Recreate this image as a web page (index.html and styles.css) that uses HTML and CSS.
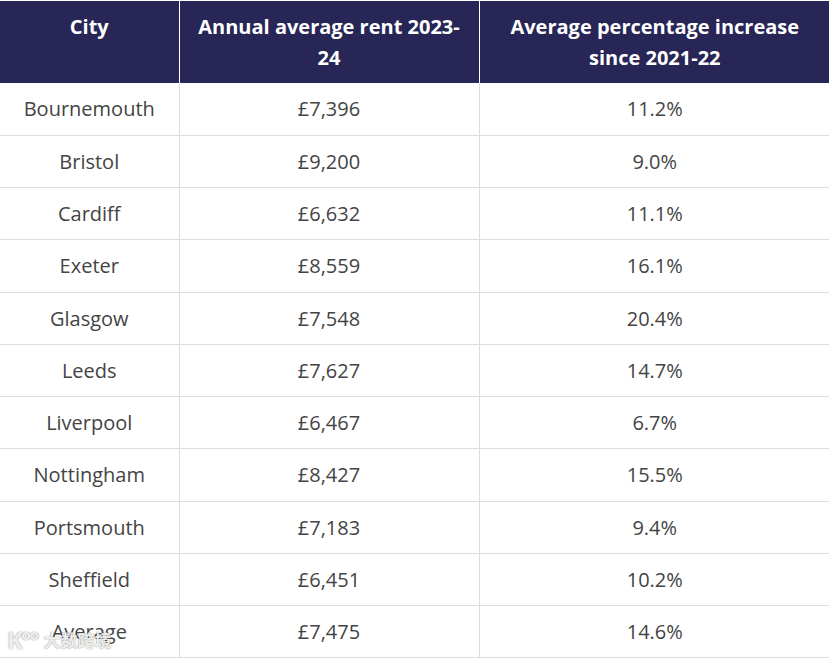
FILE: index.html
```html
<!DOCTYPE html>
<html>
<head>
<meta charset="utf-8">
<link rel="stylesheet" href="styles.css">
</head>
<body>
<div class="wrap">
<table class="rent">
  <thead>
    <tr><th class="c1">City</th><th class="c2">Annual average rent 2023-24</th><th class="c3">Average percentage increase since 2021-22</th></tr>
  </thead>
  <tbody>
    <tr><td>Bournemouth</td><td>£7,396</td><td>11.2%</td></tr>
    <tr><td>Bristol</td><td>£9,200</td><td>9.0%</td></tr>
    <tr><td>Cardiff</td><td>£6,632</td><td>11.1%</td></tr>
    <tr><td>Exeter</td><td>£8,559</td><td>16.1%</td></tr>
    <tr><td>Glasgow</td><td>£7,548</td><td>20.4%</td></tr>
    <tr><td>Leeds</td><td>£7,627</td><td>14.7%</td></tr>
    <tr><td>Liverpool</td><td>£6,467</td><td>6.7%</td></tr>
    <tr><td>Nottingham</td><td>£8,427</td><td>15.5%</td></tr>
    <tr><td>Portsmouth</td><td>£7,183</td><td>9.4%</td></tr>
    <tr><td>Sheffield</td><td>£6,451</td><td>10.2%</td></tr>
    <tr><td>Average</td><td>£7,475</td><td>14.6%</td></tr>
  </tbody>
</table>
<div class="watermark"><span class="wm-logo">K°°</span><span class="wm-text">大数跨境</span></div>
</div>
</body>
</html>
```
FILE: styles.css
```css
html, body {
  margin: 0;
  padding: 0;
  background: #fff;
  overflow: hidden;
}
.wrap {
  position: relative;
  width: 829px;
}
.rent {
  border-collapse: collapse;
  width: 830px;
  table-layout: fixed;
  font-family: "Open Sans", "Noto Sans", sans-serif;
  margin-top: 1px;
}
.rent th {
  background: #272656;
  color: #ffffff;
  font-weight: 700;
  font-size: 20px;
  line-height: 31px;
  height: 82px;
  padding: 10px 16px 0;
  text-align: center;
  vertical-align: top;
  border-left: 1px solid #ffffff;
  box-sizing: border-box;
}
.rent th.c1 { width: 179px; border-left: none; }
.rent th.c2 { width: 300px; }
.rent th.c3 { width: 351px; }
.rent td {
  color: #444444;
  font-size: 20px;
  height: 52.27px;
  padding: 0;
  text-align: center;
  border-left: 1px solid #dddddd;
  border-bottom: 1px solid #dddddd;
  box-sizing: border-box;
}
.rent td:first-child { border-left: none; }
.watermark {
  position: absolute;
  left: 7px;
  top: 628px;
  display: flex;
  align-items: center;
  gap: 6px;
  height: 22px;
  color: rgba(255,255,255,0.9);
  text-shadow: 0 0 1px rgba(0,0,0,0.45), 0 0 2px rgba(0,0,0,0.2);
}
.wm-logo {
  font-family: "Open Sans", sans-serif;
  font-size: 24px;
  font-weight: 700;
  line-height: 22px;
  letter-spacing: -2px;
}
.wm-text {
  font-family: "Noto Sans CJK SC", sans-serif;
  font-size: 17px;
  font-weight: 700;
  line-height: 22px;
}
```
